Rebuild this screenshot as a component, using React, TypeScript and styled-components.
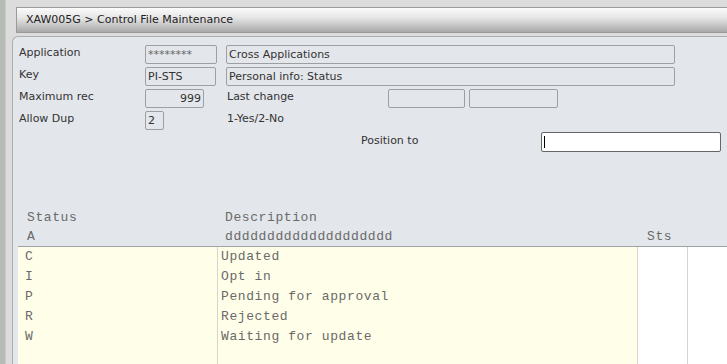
import styled, { createGlobalStyle } from "styled-components";

const GlobalStyle = createGlobalStyle`
  html, body {
    margin: 0;
    padding: 0;
    background: #dcdcdc;
    overflow: hidden;
  }
  #root {
    height: 364px;
  }
`;

const ROWS = [
  { code: "C", text: "Updated" },
  { code: "I", text: "Opt in" },
  { code: "P", text: "Pending for approval" },
  { code: "R", text: "Rejected" },
  { code: "W", text: "Waiting for update" },
  { code: "", text: "" },
];

export default function App() {
  return (
    <Page>
      <GlobalStyle />
      <Strip />
      <Main>
        <TitleBar>XAW005G &gt; Control File Maintenance</TitleBar>
        <Panel>
          <Form>
            <Row>
              <Label>Application</Label>
              <Slot>
                <Box width={72} muted>********</Box>
              </Slot>
              <Box width={449}>Cross Applications</Box>
            </Row>
            <Row>
              <Label>Key</Label>
              <Slot>
                <Box width={71}>PI-STS</Box>
              </Slot>
              <Box width={449}>Personal info: Status</Box>
            </Row>
            <Row>
              <Label>Maximum rec</Label>
              <Slot>
                <Box width={59} right>999</Box>
              </Slot>
              <Text width={161}>Last change</Text>
              <Box width={77} />
              <Gap />
              <Box width={89} />
            </Row>
            <Row>
              <Label>Allow Dup</Label>
              <Slot>
                <Box width={19}>2</Box>
              </Slot>
              <Text>1-Yes/2-No</Text>
            </Row>
            <PositionRow>
              <Text width={180}>Position to</Text>
              <InputWrap>
                <PositionInput defaultValue="" />
              </InputWrap>
            </PositionRow>
          </Form>

          <Grid>
            <Head>
              <HeadCell>Status</HeadCell>
              <HeadCell>Description</HeadCell>
              <HeadCell />
              <HeadCell>A</HeadCell>
              <HeadCell>dddddddddddddddddddd</HeadCell>
              <HeadCell>Sts</HeadCell>
            </Head>
            <Body>
              <Col width={199} pad={7} yellow>
                {ROWS.map((r, i) => (
                  <Cell key={i}>{r.code}</Cell>
                ))}
              </Col>
              <Col width={420} pad={3} yellow>
                {ROWS.map((r, i) => (
                  <Cell key={i}>{r.text}</Cell>
                ))}
              </Col>
              <Col width={50} />
              <Col />
            </Body>
          </Grid>
        </Panel>
      </Main>
    </Page>
  );
}

const Page = styled.div`
  display: flex;
  height: 364px;
  font-family: "DejaVu Sans", Verdana, sans-serif;
  color: #333;
`;

const Strip = styled.div`
  width: 5px;
  background: #b6bbb6;
  border-right: 1px solid #c8ccc8;
`;

const Main = styled.div`
  flex: 1;
  display: flex;
  flex-direction: column;
  padding: 7px 0 0 6px;
  min-width: 0;
`;

const TitleBar = styled.div`
  margin-left: 4px;
  height: 24px;
  line-height: 24px;
  padding-left: 9px;
  font-size: 11px;
  color: #222;
  border: 1px solid #9a9a9a;
  border-right: none;
  background: linear-gradient(#fbfbfb 0%, #e6e6e6 40%, #b9b9b9 85%, #a9a9a9 100%);
`;

const Panel = styled.div`
  flex: 1;
  margin-top: 3px;
  background: #e3e6ea;
  border: 1px solid #a9adb0;
  border-right: none;
  border-bottom: none;
  border-top-left-radius: 6px;
  display: flex;
  flex-direction: column;
`;

const Form = styled.div`
  display: flex;
  flex-direction: column;
  padding: 6px 0 0 6px;
`;

const Row = styled.div`
  display: flex;
  align-items: center;
  height: 22px;
`;

const Label = styled.div`
  width: 126px;
  font-size: 11px;
  color: #333;
  margin-bottom: 3px;
`;

const Slot = styled.div`
  width: 81px;
  display: flex;
`;

const Gap = styled.div`
  width: 4px;
`;

const Box = styled.div<{ width: number; right?: boolean; muted?: boolean }>`
  box-sizing: border-box;
  width: ${(p) => p.width}px;
  height: 19px;
  line-height: 17px;
  padding: 0 2px;
  border: 1px solid #9d9fa2;
  border-radius: 2px;
  font-size: 11px;
  color: ${(p) => (p.muted ? "#666" : "#333")};
  text-align: ${(p) => (p.right ? "right" : "left")};
  white-space: nowrap;
  overflow: hidden;
`;

const Text = styled.div<{ width?: number }>`
  width: ${(p) => (p.width ? `${p.width}px` : "auto")};
  padding-left: 1px;
  font-size: 11px;
  color: #333;
  margin-bottom: 3px;
`;

const PositionRow = styled.div`
  display: flex;
  align-items: center;
  height: 22px;
  margin: 0 0 0 341px;
`;

const InputWrap = styled.div`
  position: relative;
  &::after {
    content: "";
    position: absolute;
    left: 3px;
    top: 4px;
    width: 1px;
    height: 12px;
    background: #000;
  }
`;

const PositionInput = styled.input`
  display: block;
  box-sizing: border-box;
  width: 180px;
  height: 20px;
  border: 1px solid #666;
  border-radius: 2px;
  background: #fff;
  outline: none;
  padding: 0 2px;
  font-size: 11px;
`;

const Grid = styled.div`
  flex: 1;
  display: flex;
  flex-direction: column;
  margin: 55px 0 0 5px;
`;

const Head = styled.div`
  display: grid;
  grid-template-columns: 198px 422px 1fr;
  grid-auto-rows: 19px;
  padding-left: 9px;
  border-bottom: 1px solid #a0a3a6;
  font-family: "Liberation Mono", "Courier New", monospace;
  font-size: 13px;
  letter-spacing: 0.6px;
  color: #6a6a6a;
`;

const HeadCell = styled.div`
  white-space: nowrap;
  line-height: 19px;
`;

const Body = styled.div`
  flex: 1;
  display: flex;
  background: #fff;
`;

const Col = styled.div<{ width?: number; pad?: number; yellow?: boolean }>`
  ${(p) => (p.width ? `width: ${p.width}px;` : "flex: 1;")}
  padding-left: ${(p) => p.pad ?? 0}px;
  box-sizing: border-box;
  background: ${(p) => (p.yellow ? "#fffee8" : "#fff")};
  border-left: 1px solid #d4d4d0;
  &:first-child {
    border-left: none;
  }
`;

const Cell = styled.div`
  height: 20px;
  line-height: 20px;
  font-family: "Liberation Mono", "Courier New", monospace;
  font-size: 13px;
  letter-spacing: 0.6px;
  color: #6a6a6a;
  white-space: nowrap;
`;
